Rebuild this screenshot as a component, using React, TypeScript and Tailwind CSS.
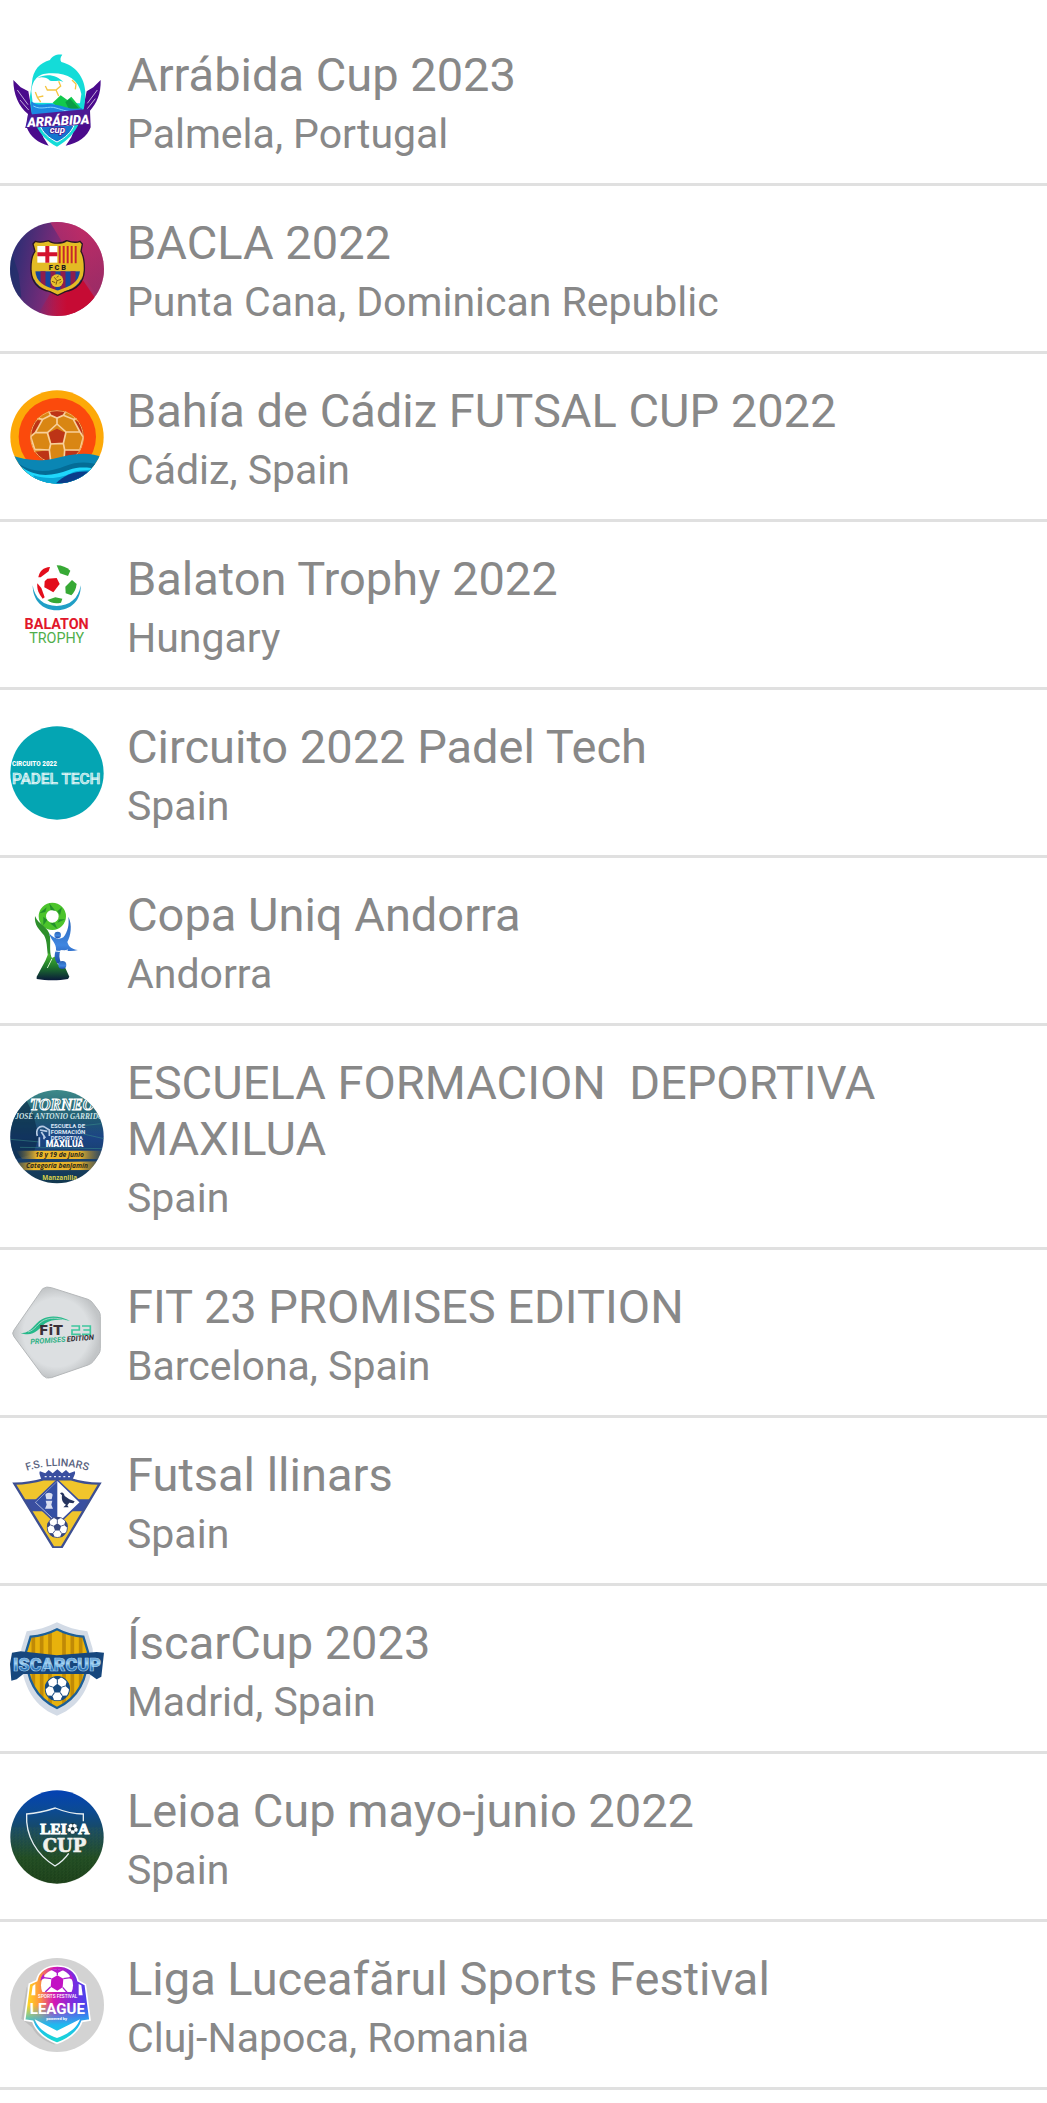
import type { ReactNode } from "react";

type LogoProps = { viewBox: string; label: string; children: ReactNode };

function Logo({ viewBox, label, children }: LogoProps) {
  return (
    <svg viewBox={viewBox} role="img" aria-label={label} className="size-[94px] shrink-0">
      {children}
    </svg>
  );
}

type BallProps = { cx: number; cy: number; r: number; dark: string; light: string };

/* Classic football: a centre pentagon, five seams and five edge patches. */
function Ball({ cx, cy, r, dark, light }: BallProps) {
  return (
    <svg x={cx - r} y={cy - r} width={r * 2} height={r * 2} viewBox="-50 -50 100 100">
      <circle r="48" fill={light} stroke={dark} strokeWidth="4" />
      <path d="M0-19 18-6 11 15-11 15-18-6Z" fill={dark} />
      <path
        d="M0-19V-34M18-6 32-11M11 15 20 28M-11 15-20 28M-18-6-32-11"
        stroke={dark}
        strokeWidth="4"
      />
      <path
        d="M0-34-15-44-6-49H6L15-44ZM32-11 37-29 45-20 49-5 46 2ZM20 28 38 27 33 36 22 45 13 44ZM-20 28-38 27-33 36-22 45-13 44ZM-32-11-37-29-45-20-49-5-46 2Z"
        fill={dark}
      />
    </svg>
  );
}

function ArrabidaLogo() {
  return (
    <Logo viewBox="30 70 282 282" label="Arrábida Cup">
      <path d="M40 148C40 190 56 228 84 250L80 290C90 318 115 338 146 345L130 320 92 220 85 182 62 170Z" fill="#4b0b8c" />
      <path d="M302 148C303 190 290 218 270 240L272 290C262 318 235 338 197 345L214 320 252 220 260 182 280 170Z" fill="#4b0b8c" />
      <path d="M52 178 84 222M60 208 86 238M292 178 262 218M286 204 262 234" stroke="#fff" strokeWidth="2" />
      <path
        d="M96 156C98 118 120 96 150 88 156 76 170 70 187 72 180 80 180 88 184 94 226 104 254 140 256 184 256 250 236 312 171 348 112 318 90 260 90 196Z"
        fill="#14dcd8"
      />
      <path d="M94 182C98 140 122 128 152 128 200 126 236 146 244 190L240 218 98 216Z" fill="#fff" />
      <path d="M112 142C140 126 172 134 190 154 176 146 166 154 150 150 140 140 126 138 112 142Z" fill="#14dcd8" />
      <g fill="none" stroke="#f5c542" strokeWidth="4">
        <path d="M136 166 142 178H168L182 166 176 152M168 178 176 196M106 184 112 200 130 196M112 200 122 214M216 148 228 160 226 176" />
      </g>
      <path d="M158 216 182 194 202 208 214 198 244 234 180 236Z" fill="#12c94e" />
      <path d="M196 214 210 204 238 234 206 234Z" fill="#0a9c45" />
      <path d="M93 212C120 232 140 214 166 222 196 226 214 240 246 232L240 262 96 262Z" fill="#1b86e2" />
      <path d="M100 226C124 240 146 224 168 232 190 238 206 246 232 242" fill="none" stroke="#7fd4ff" strokeWidth="3" />
      <path d="M120 284H222C214 304 196 322 171 334 146 322 128 306 120 284Z" fill="#1376cf" stroke="#fff" strokeWidth="3" />
      <path d="M84 252 270 234 268 280 76 292Z" fill="#4b1a94" />
      <g fontFamily="Roboto" fontStyle="italic" fill="#fff" stroke="#4b1a94" strokeWidth="5" paintOrder="stroke" textAnchor="middle">
        <text x="175" y="284" fontSize="39" fontWeight="900" transform="rotate(-3 175 270)">ARRÁBIDA</text>
        <text x="172" y="306" fontSize="29" fontWeight="700">cup</text>
      </g>
    </Logo>
  );
}

function BaclaLogo() {
  const shield = "M106 92C122 98 136 92 146 90 158 100 186 100 200 90 212 94 226 98 240 92L247 100 243 122C250 134 254 152 253 180 250 222 222 238 196 243L173 254 150 243C120 238 96 220 93 180 92 152 96 134 105 122L99 100Z";
  return (
    <Logo viewBox="30 34 282 282" label="FC Barcelona">
      <defs>
        <linearGradient id="bacla-bg" x1="0" y1="0.4" x2="1" y2="0.6">
          <stop offset="0" stopColor="#2b2e74" />
          <stop offset="0.4" stopColor="#722b78" />
          <stop offset="0.7" stopColor="#b52a63" />
          <stop offset="1" stopColor="#a12c66" />
        </linearGradient>
        <linearGradient id="bacla-glow" x1="0" y1="0" x2="0" y2="1">
          <stop offset="0" stopColor="#c62c68" stopOpacity="0.7" />
          <stop offset="1" stopColor="#8a2c66" stopOpacity="0.5" />
        </linearGradient>
        <linearGradient id="bacla-red" x1="0" y1="0" x2="1" y2="0">
          <stop offset="0" stopColor="#c60b34" stopOpacity="0" />
          <stop offset="0.5" stopColor="#c60b34" />
        </linearGradient>
        <clipPath id="bacla-clip"><circle cx="171" cy="175" r="141" /></clipPath>
        <clipPath id="bacla-shield"><path d={shield} /></clipPath>
      </defs>
      <g clipPath="url(#bacla-clip)">
        <rect x="30" y="34" width="282" height="282" fill="url(#bacla-bg)" />
        <path d="M150 34 190 100 312 290V34Z" fill="url(#bacla-glow)" />
        <path d="M250 210 292 272 240 316H110L150 250Z" fill="url(#bacla-red)" />
        <path d="M30 110 56 190 64 260 30 250Z" fill="#1b3068" opacity="0.6" />
      </g>
      <g clipPath="url(#bacla-shield)">
        <rect x="90" y="86" width="166" height="170" fill="#e3bb24" />
        <rect x="112" y="106" width="60" height="50" fill="#fff" />
        <path d="M142 106V156M112 131H172" stroke="#d3122e" strokeWidth="12" />
        <rect x="174" y="106" width="56" height="52" fill="#f2c61e" />
        <path d="M179 106V158M191 106V158M203 106V158M215 106V158M227 106V158" stroke="#c4262e" strokeWidth="6" />
        <rect x="102" y="182" width="142" height="60" fill="#17479e" />
        <path d="M129 182V240M159 182V244M189 182V244M219 182V240" stroke="#8f1d4b" strokeWidth="15" />
        <path d="M101 180C102 218 130 232 173 245 214 232 243 218 245 180" fill="none" stroke="#e3bb24" strokeWidth="10" />
      </g>
      <path d={shield} fill="none" stroke="#2a1526" strokeWidth="4" />
      <text x="172" y="178" fontFamily="Roboto" fontWeight="900" fontSize="22" fill="#1d1a20" textAnchor="middle">F C B</text>
      <circle cx="171" cy="210" r="19" fill="#e8c02c" />
      <path d="M163 200 171 210 183 206M171 210 168 222M156 212 166 216M176 196 170 200M178 218 184 212" stroke="#7d5a12" strokeWidth="3" fill="none" />
    </Logo>
  );
}

function CadizLogo() {
  return (
    <Logo viewBox="30 28 282 282" label="Bahía de Cádiz Futsal Cup">
      <defs>
        <clipPath id="cadiz-clip"><circle cx="171" cy="169" r="140" /></clipPath>
        <clipPath id="cadiz-ball"><circle cx="171" cy="169" r="81" /></clipPath>
      </defs>
      <g clipPath="url(#cadiz-clip)">
        <rect x="30" y="28" width="282" height="282" fill="#fda908" />
        <circle cx="172" cy="168" r="116" fill="#fb4a0c" />
        <g clipPath="url(#cadiz-ball)">
          <rect x="88" y="86" width="170" height="170" fill="#d98613" />
          <path d="M144 88H200L190 104 171 112 152 104ZM171 144 196 156 190 186 154 188 146 156ZM250 128 222 118 236 150 254 168ZM92 130 110 118 126 120 106 154 92 162ZM104 214 148 208 150 240H110ZM192 208 240 210 230 240H196Z" fill="#bd3416" />
          <g fill="none" stroke="#f8cf9b" strokeWidth="5">
            <path d="M144 88 152 104 171 112 190 104 200 88M171 112V130M171 130 142 156 152 190 190 188 198 154ZM152 104 128 116 106 156 142 156M190 104 220 116 240 154 198 154M128 116 108 112M220 116 236 112M106 156 92 168 104 206 148 208 152 190M240 154 250 170 240 208 194 208 190 188M148 208 152 240M194 208 192 240M104 206 100 220M240 208 244 222" />
          </g>
          <circle cx="171" cy="169" r="79" fill="none" stroke="#f7a65e" strokeWidth="3" />
        </g>
        <path d="M30 222C70 236 110 244 160 234 210 222 262 208 312 232V310H30Z" fill="#0a86b4" />
        <path d="M40 236C90 282 150 276 196 256 236 240 270 244 312 256V310H60Z" fill="#046c96" />
        <path d="M66 260C110 292 160 286 206 268 240 256 264 262 300 264L280 310H90Z" fill="#1fd7fb" />
        <path d="M100 284C150 300 190 290 220 274 244 266 264 270 290 264L260 310H110Z" fill="#0aa6d6" />
        <path d="M168 308C196 280 230 268 276 274L250 310Z" fill="#0b3d8a" />
      </g>
    </Logo>
  );
}

function BalatonLogo() {
  return (
    <Logo viewBox="30 22 282 282" label="Balaton Trophy">
      <path d="M98 104C104 144 132 166 170 166 208 166 236 144 242 104 244 150 212 179 170 179 128 179 98 150 98 104Z" fill="#219fc6" />
      <path d="M142 84 170 82 179 100 160 125 133 110 134 92Z" fill="#e30d1b" />
      <path d="M115 80C118 62 130 50 150 49L146 62 122 80Z" fill="#e30d1b" />
      <path d="M112 98 124 112 134 140 128 144C116 130 110 114 112 98Z" fill="#e30d1b" />
      <path d="M170 44C186 44 200 50 211 60L204 76 180 68Z" fill="#37a935" />
      <path d="M216 88 230 100C228 116 222 126 214 134L197 128 196 108Z" fill="#37a935" />
      <path d="M142 148 166 140 187 144 183 156C168 160 154 158 142 148Z" fill="#37a935" />
      <text x="170" y="235" fontFamily="Roboto" fontWeight="700" fontSize="43" fill="#e1172b" textAnchor="middle">BALATON</text>
      <text x="170" y="278" fontFamily="Roboto" fontSize="43" fill="#4fae4b" textAnchor="middle">TROPHY</text>
    </Logo>
  );
}

function PadelLogo() {
  return (
    <Logo viewBox="30 32 282 282" label="Circuito 2022 Padel Tech">
      <circle cx="171" cy="173" r="140" fill="#04a5b3" />
      <text x="36" y="152" fontFamily="Roboto" fontWeight="900" fontSize="19" fill="#fff">CIRCUITO 2022</text>
      <g fontFamily="Roboto" fill="#8fd7dd" stroke="#e6f8f9" strokeWidth="2" fontSize="46" fontWeight="500">
        <text x="36" y="206">PADEL</text>
        <text x="301" y="206" textAnchor="end">TECH</text>
      </g>
    </Logo>
  );
}

function AndorraLogo() {
  return (
    <Logo viewBox="30 40 282 282" label="Copa Uniq Andorra">
      <defs>
        <linearGradient id="andorra-cup" x1="0" y1="0" x2="0" y2="1">
          <stop offset="0" stopColor="#4fc02f" />
          <stop offset="0.5" stopColor="#1f7a2c" />
          <stop offset="1" stopColor="#0a1a3a" />
        </linearGradient>
        <linearGradient id="andorra-man" x1="0" y1="0" x2="0" y2="1">
          <stop offset="0" stopColor="#2a63b5" />
          <stop offset="0.6" stopColor="#3f86e0" />
          <stop offset="1" stopColor="#1b4aa6" />
        </linearGradient>
      </defs>
      <circle cx="157" cy="107" r="30" fill="none" stroke="#4cc42c" strokeWidth="22" />
      <path d="M118 98 136 94 140 80ZM130 134 142 118 130 108ZM172 145 164 126 150 128ZM196 116 178 116 172 126ZM186 80 172 92 180 104ZM148 68 152 88 166 90Z" fill="#23912a" />
      <path d="M105 106C116 134 146 136 150 168 152 190 148 208 154 230L144 226C140 200 142 182 132 164 118 146 102 134 105 106Z" fill="#2d8f2b" />
      <path d="M146 216 156 232 168 226 172 250 196 262 208 288 204 295C176 300 140 300 110 295V288L136 240Z" fill="url(#andorra-cup)" />
      <path d="M142 262 156 234" stroke="#d8f5cf" strokeWidth="3" />
      <g fill="url(#andorra-man)">
        <path d="M205 108C218 132 212 166 202 184 206 200 218 206 234 208 216 214 196 210 182 208 176 222 178 234 182 244L174 250C162 238 162 222 168 208 170 188 152 178 147 158 160 174 178 178 190 170 204 152 208 132 205 108Z" />
        <circle cx="173" cy="163" r="10" />
        <circle cx="187" cy="253" r="12" />
      </g>
      <path d="M162 210C178 214 190 212 204 208" stroke="#fff" strokeWidth="3" fill="none" />
    </Logo>
  );
}

function MaxiluaLogo() {
  return (
    <Logo viewBox="30 58 282 282" label="Escuela de Formación Deportiva Maxilua">
      <defs>
        <linearGradient id="maxilua-bg" x1="0" y1="0" x2="0" y2="1">
          <stop offset="0" stopColor="#3e8a8a" />
          <stop offset="0.3" stopColor="#1f5a70" />
          <stop offset="0.5" stopColor="#1d4585" />
          <stop offset="1" stopColor="#12384e" />
        </linearGradient>
        <linearGradient id="maxilua-gold" x1="0" y1="0" x2="1" y2="0">
          <stop offset="0" stopColor="#9a7a2c" stopOpacity="0" />
          <stop offset="0.25" stopColor="#eeb92a" />
          <stop offset="0.75" stopColor="#e4b02c" />
          <stop offset="1" stopColor="#9a7a2c" stopOpacity="0.2" />
        </linearGradient>
        <clipPath id="maxilua-clip"><circle cx="171" cy="198" r="140" /></clipPath>
      </defs>
      <g clipPath="url(#maxilua-clip)">
        <rect x="30" y="58" width="282" height="282" fill="url(#maxilua-bg)" />
        <path d="M30 90H80L100 130 116 200 100 250 30 270Z" fill="#0c2c4a" opacity="0.65" />
        <path d="M30 206 120 214M250 190 312 204M60 230 310 234M240 166 312 158" stroke="#3f9a8c" strokeWidth="2" opacity="0.7" />
        <path d="M48 240H304V265H66Z" fill="url(#maxilua-gold)" />
        <path d="M30 276 310 272V298L40 299Z" fill="url(#maxilua-gold)" />
        <g fontFamily="Liberation Serif" fontWeight="700" fontStyle="italic" fill="#fff">
          <text x="90" y="117" fontSize="47" fill="#276b78" stroke="#fff" strokeWidth="3">TORNEO</text>
          <text x="46" y="144" fontSize="22" fill="#cfe4e6">JOSÉ ANTONIO GARRIDO</text>
        </g>
        <g fontFamily="Roboto" fontWeight="700" fill="#dbe6f5" fontSize="18">
          <text x="152" y="171">ESCUELA DE</text>
          <text x="152" y="190">FORMACIÓN</text>
          <text x="152" y="208">DEPORTIVA</text>
          <text x="137" y="230" fontSize="26" fontWeight="900" fill="#fff">MAXILUA</text>
        </g>
        <path d="M112 196C106 176 118 164 132 168L148 178V196M120 178 142 182M118 200V228M132 196V206M124 184 136 202" fill="none" stroke="#b9cbe4" strokeWidth="5" />
        <g fontFamily="Open Sans" fontWeight="700" fontStyle="italic" fill="#2c2a1c" fontSize="20">
          <text x="106" y="260">18 y 19 de junio</text>
          <text x="78" y="293">Categoría benjamín</text>
        </g>
        <text x="127" y="327" fontFamily="Open Sans" fontWeight="700" fontSize="19" fill="#d9d04c">Manzanilla</text>
      </g>
    </Logo>
  );
}

function FitLogo() {
  return (
    <Logo viewBox="30 46 282 282" label="FIT 23 Promises Edition">
      <defs>
        <radialGradient id="fit-bg">
          <stop offset="0.75" stopColor="#dcdfe1" />
          <stop offset="1" stopColor="#c2c5c7" />
        </radialGradient>
      </defs>
      <path
        d="M128 54Q140 46 154 51L264 86Q274 90 279 98L297 122Q301 128 301 138V234Q301 244 296 250L280 272Q275 279 264 283L154 321Q138 326 128 314L42 198Q34 188 42 178Z"
        fill="url(#fit-bg)"
        stroke="#b5b8ba"
        strokeWidth="3"
      />
      <path d="M60 186C92 192 100 160 126 146 150 132 180 136 210 150 182 146 156 144 136 158 116 176 98 202 60 186Z" fill="#26b98a" />
      <path d="M84 184C106 178 112 158 134 148 158 138 180 144 200 150" fill="none" stroke="#dcdfe1" strokeWidth="2" />
      <text x="117" y="192" fontFamily="DejaVu Sans" fontWeight="700" fontSize="42" fill="#3a3038">FiT</text>
      <path d="M214 166H238V178H216V191H242M246 166H271V191H246M250 178H271" fill="none" stroke="#3fc89e" strokeWidth="5" />
      <g fontFamily="Roboto" fontSize="22" fontStyle="italic" fontWeight="700" transform="rotate(-4 186 210)">
        <text x="91" y="214" fill="#2fb185">PROMISES</text>
        <text x="201" y="214" fill="#2e2a30">EDITION</text>
      </g>
    </Logo>
  );
}

function LlinarsLogo() {
  return (
    <Logo viewBox="30 40 282 282" label="F.S. Llinars">
      <defs>
        <path id="llinars-arc" d="M76 92Q170 60 268 92" />
        <clipPath id="llinars-clip"><path d="M44 129 80 126 130 118H214L262 126 298 129 187 320H158Z" /></clipPath>
      </defs>
      <text fontFamily="Roboto" fontWeight="500" fontSize="32" fill="#5a6380">
        <textPath href="#llinars-arc" startOffset="50%" textAnchor="middle">F.S. LLINARS</textPath>
      </text>
      <g clipPath="url(#llinars-clip)">
        <rect x="40" y="110" width="262" height="212" fill="#f0c52c" />
        <path d="M40 176H302V212H40Z" fill="#3a4fa0" />
      </g>
      <path d="M43 129Q90 128 130 116H214Q250 128 299 129L185 320H160Z" fill="none" stroke="#3d4f92" strokeWidth="7" />
      <path d="M124 116C120 104 116 96 120 92L136 98 146 88 158 98 172 86 186 98 198 88 208 98 224 92C228 98 222 106 218 116Z" fill="#3a4fa0" />
      <path d="M134 108H210" stroke="#e7ebf8" strokeWidth="4" strokeDasharray="6 8" />
      <path d="M172 118 242 185 172 252 102 185Z" fill="#fff" stroke="#3a4fa0" strokeWidth="5" />
      <path d="M172 122V246L107 185Z" fill="#3450a4" />
      <path d="M136 162C138 154 156 154 158 162L155 176H139ZM137 180H157L154 192 159 204H135L140 192Z" fill="#d8def0" />
      <path d="M180 158C186 152 192 156 194 166L208 176 224 182 220 188 208 186 202 194 206 200H190L198 192C188 188 184 176 186 164Z" fill="#26345f" />
      <Ball cx={172} cy={260} r={32} dark="#37477f" light="#fff" />
    </Logo>
  );
}

function IscarLogo() {
  return (
    <Logo viewBox="30 50 282 282" label="ÍscarCup">
      <defs>
        <linearGradient id="iscar-text" x1="0" y1="0" x2="0" y2="1">
          <stop offset="0.1" stopColor="#3b7cbc" />
          <stop offset="0.45" stopColor="#a5d6f6" />
          <stop offset="0.6" stopColor="#3a86c8" />
          <stop offset="0.9" stopColor="#1c5a9a" />
        </linearGradient>
        <clipPath id="iscar-clip"><path d="M171 72C194 84 220 92 250 94L264 140C264 210 240 276 171 308 102 276 78 210 78 140L92 94C122 92 148 84 171 72Z" /></clipPath>
      </defs>
      <path d="M171 51C200 66 230 74 262 78L278 130C284 220 250 300 171 331 92 300 58 220 64 130L80 78C112 74 142 66 171 51Z" fill="#d3dbe6" />
      <g clipPath="url(#iscar-clip)">
        <rect x="70" y="60" width="204" height="256" fill="#e8b20c" />
        <path d="M100 60V316M125 60V316M150 60V316M192 60V316M217 60V316M242 60V316" stroke="#c08a06" strokeWidth="11" />
      </g>
      <path d="M171 72C194 84 220 92 250 94L264 140C264 210 240 276 171 308 102 276 78 210 78 140L92 94C122 92 148 84 171 72Z" fill="none" stroke="#1c5f98" strokeWidth="7" />
      <path d="M36 142 62 138 170 150 290 140 312 142 304 214 290 222 268 206H70L50 222 34 226 30 176Z" fill="#17477d" />
      <text x="171" y="197" fontFamily="Roboto" fontWeight="900" fontSize="54" fill="url(#iscar-text)" stroke="#a6d3f2" strokeWidth="2" textAnchor="middle">ISCARCUP</text>
      <Ball cx={172} cy={250} r={38} dark="#174a80" light="#fff" />
    </Logo>
  );
}

function LeioaLogo() {
  return (
    <Logo viewBox="30 58 282 282" label="Leioa Cup">
      <defs>
        <linearGradient id="leioa-bg" x1="0" y1="0" x2="0" y2="1">
          <stop offset="0" stopColor="#0442b4" />
          <stop offset="0.2" stopColor="#0b4a96" />
          <stop offset="0.5" stopColor="#1c4a52" />
          <stop offset="0.72" stopColor="#1f4a22" />
          <stop offset="1" stopColor="#1a3d18" />
        </linearGradient>
        <pattern id="leioa-grass" width="11" height="9" patternUnits="userSpaceOnUse">
          <path d="M1 2h3M6 5h2M9 1h1M3 7h2" stroke="#4c7a3c" strokeWidth="2" opacity="0.5" />
        </pattern>
      </defs>
      <circle cx="171" cy="199" r="140" fill="url(#leioa-bg)" />
      <path d="M34 170H308A140 140 0 0 1 34 230Z" fill="url(#leioa-grass)" />
      <path d="M250 152V130C220 130 190 122 166 112 142 120 110 128 80 130 76 196 110 252 165 286 184 274 198 260 206 248" fill="none" stroke="#e6eef2" strokeWidth="4" />
      <g fontFamily="Liberation Serif" fontWeight="700" fill="#fff" stroke="#fff" strokeWidth="3" fontSize="46">
        <text x="121" y="191">LEI</text>
        <text x="235" y="191">A</text>
      </g>
      <text x="128" y="244" fontFamily="DejaVu Serif" fontWeight="700" fontSize="54" fill="#f1f1ec" stroke="#f1f1ec" strokeWidth="2">CUP</text>
      <Ball cx={218} cy={174} r={17} dark="#12303c" light="#fff" />
    </Logo>
  );
}

function LuceafarulLogo() {
  const crest = "M110 122C116 90 144 78 172 78 202 78 228 92 234 122L256 134 270 240 246 244C234 278 208 296 171 310 134 296 110 278 98 244L74 240 88 132Z";
  return (
    <Logo viewBox="30 54 282 282" label="Liga Luceafărul Sports Festival">
      <defs>
        <linearGradient id="liga-h" x1="0" y1="0" x2="1" y2="0">
          <stop offset="0" stopColor="#ffe61a" />
          <stop offset="0.22" stopColor="#ff9a3a" />
          <stop offset="0.45" stopColor="#d516b4" />
          <stop offset="0.75" stopColor="#7a2be0" />
          <stop offset="1" stopColor="#3b4af0" />
        </linearGradient>
        <linearGradient id="liga-v" x1="0" y1="0" x2="0" y2="1">
          <stop offset="0.5" stopColor="#22c5ee" stopOpacity="0" />
          <stop offset="0.76" stopColor="#1fb8f0" />
          <stop offset="1" stopColor="#18ddd0" />
        </linearGradient>
        <clipPath id="liga-ball"><path d="M118 156V130C122 70 220 70 224 130V156Z" /></clipPath>
      </defs>
      <circle cx="171" cy="195" r="141" fill="#d3d3d3" />
      <path d="M80 140 64 236 96 262C110 290 140 306 165 314L110 230Z" fill="#8c8c8c" opacity="0.3" />
      <path d={crest} fill="url(#liga-h)" />
      <path d={crest} fill="url(#liga-v)" stroke="#fff" strokeWidth="5" />
      <g clipPath="url(#liga-ball)">
        <circle cx="171" cy="136" r="48" fill="#fff" />
        <path d="M154 116 172 106 190 116 188 142 172 152 152 140Z" fill="#c211c4" />
        <path d="M172 106V86M190 116 218 112M188 142 202 158M152 140 136 156M154 116 124 112" stroke="#a51fd0" strokeWidth="4" />
        <path d="M150 88H194L172 100ZM120 122 130 100 134 114ZM222 122 212 100 208 114Z" fill="#b51bcb" />
      </g>
      <path d="M98 138 106 132V166H94ZM244 136 236 132V166H248Z" fill="#fff" />
      <g fontFamily="Roboto" fill="#fff" textAnchor="middle">
        <text x="173" y="175" fontSize="14" fontWeight="500">SPORTS FESTIVAL</text>
        <text x="172" y="222" fontSize="45" fontWeight="700">LEAGUE</text>
        <text x="170" y="240" fontSize="12" fontWeight="700">powered by</text>
      </g>
      <path d="M104 238 171 272 240 238C230 266 204 282 171 294 138 282 114 266 104 238Z" fill="#fff" />
    </Logo>
  );
}

const tournaments = [
  { name: "Arrábida Cup 2023", place: "Palmela, Portugal", Icon: ArrabidaLogo },
  { name: "BACLA 2022", place: "Punta Cana, Dominican Republic", Icon: BaclaLogo },
  { name: "Bahía de Cádiz FUTSAL CUP 2022", place: "Cádiz, Spain", Icon: CadizLogo },
  { name: "Balaton Trophy 2022", place: "Hungary", Icon: BalatonLogo },
  { name: "Circuito 2022 Padel Tech", place: "Spain", Icon: PadelLogo },
  { name: "Copa Uniq Andorra", place: "Andorra", Icon: AndorraLogo },
  { name: "ESCUELA FORMACION  DEPORTIVA MAXILUA", place: "Spain", Icon: MaxiluaLogo },
  { name: "FIT 23 PROMISES EDITION", place: "Barcelona, Spain", Icon: FitLogo },
  { name: "Futsal llinars", place: "Spain", Icon: LlinarsLogo },
  { name: "ÍscarCup 2023", place: "Madrid, Spain", Icon: IscarLogo },
  { name: "Leioa Cup mayo-junio 2022", place: "Spain", Icon: LeioaLogo },
  { name: "Liga Luceafărul Sports Festival", place: "Cluj-Napoca, Romania", Icon: LuceafarulLogo },
];

export default function App() {
  return (
    <main className="min-h-screen bg-white pt-[18px] font-['Roboto',sans-serif] text-[#888888]">
      <ul>
        {tournaments.map(({ name, place, Icon }) => (
          <li key={name} className="flex items-center gap-[23px] border-b-3 border-[#e0e0e0] pl-2.5">
            <Icon />
            <div className="min-w-0 flex-1 pt-[29px] pb-[25px]">
              <h2 className="text-[47px] leading-[56px] whitespace-pre-wrap">{name}</h2>
              <p className="mt-[7px] text-[41px] leading-[48px]">{place}</p>
            </div>
          </li>
        ))}
      </ul>
    </main>
  );
}
